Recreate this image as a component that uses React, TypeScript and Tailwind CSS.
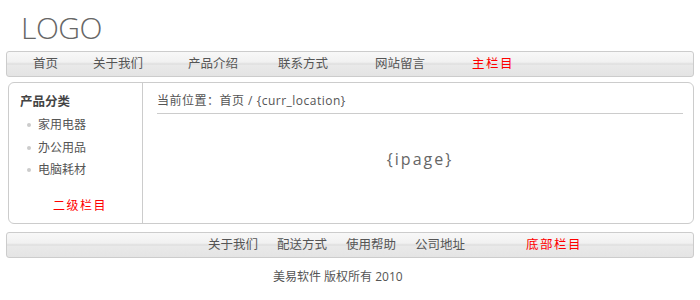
import React from "react"

const cn = "font-['Open_Sans','Noto_Sans_CJK_SC',sans-serif]"

export default function App() {
  const nav = [
    { label: "首页", ml: "ml-[26px]" },
    { label: "关于我们", ml: "ml-[35px]" },
    { label: "产品介绍", ml: "ml-[45px]" },
    { label: "联系方式", ml: "ml-[40px]" },
    { label: "网站留言", ml: "ml-[47px]" },
  ]
  const footer = ["关于我们", "配送方式", "使用帮助", "公司地址"]
  const cats = ["家用电器", "办公用品", "电脑耗材"]

  return (
    <div className={`w-[700px] h-[300px] bg-white px-[6px] text-[#555] ${cn}`}>
      {/* Logo */}
      <div className="h-[51px] pl-[15px] pt-[8px]">
        <span className="text-[30px] font-light leading-[40px] text-[#666] tracking-[-0.5px]">LOGO</span>
      </div>

      {/* Main nav */}
      <div className="h-[26px] rounded-[3px] border border-[#cccccc] bg-[linear-gradient(#f8f8f8,#f1f1f1_42%,#dedede_50%,#e9e9e9_56%,#e4e4e4)] flex items-center text-[12.5px]">
        {nav.map((n) => (
          <span key={n.label} className={n.ml}>{n.label}</span>
        ))}
        <span className="ml-[47px] text-[#ff0000] tracking-[1.5px]">主栏目</span>
      </div>

      {/* Body */}
      <div className="mt-[5px] ml-[2px] h-[142px] rounded-[6px] border border-[#cccccc] flex">
        <div className="w-[134px] border-r border-[#cccccc] pl-[11px] pt-[11px] flex flex-col">
          <div className="text-[12.5px] font-bold text-[#444] leading-[16px]">产品分类</div>
          <ul className="mt-[4px] text-[12px]">
            {cats.map((c) => (
              <li key={c} className="flex items-center h-[22.5px]">
                <span className="ml-[7px] mr-[7px] w-[4px] h-[4px] rounded-full bg-[#cccccc]" />
                {c}
              </li>
            ))}
          </ul>
          <div className="mt-auto mb-[8px] pl-[33px] text-[12px] text-[#ff0000] tracking-[1.5px]">二级栏目</div>
        </div>
        <div className="flex-1 pl-[14px] pr-[10px] flex flex-col">
          <div className="mt-[10px] pb-[4px] border-b border-[#cccccc] text-[12px] leading-[16px] tracking-[0.5px]">
            当前位置：首页 / {"{curr_location}"}
          </div>
          <div className="flex-1 flex items-center justify-center pb-[20px] text-[16px] text-[#666] tracking-[2px]">
            {"{ipage}"}
          </div>
        </div>
      </div>

      {/* Footer nav */}
      <div className="mt-[8px] h-[26px] rounded-[3px] border border-[#cccccc] bg-[linear-gradient(#f8f8f8,#f1f1f1_42%,#dedede_50%,#e9e9e9_56%,#e4e4e4)] flex items-center text-[12.5px] pl-[201px] gap-[19px]">
        {footer.map((f) => (
          <span key={f}>{f}</span>
        ))}
        <span className="ml-[42px] text-[#ff0000] tracking-[1.5px]">底部栏目</span>
      </div>

      <div className="mt-[10px] pl-[267px] text-[12px] text-[#555]">美易软件 版权所有 2010</div>
    </div>
  )
}
